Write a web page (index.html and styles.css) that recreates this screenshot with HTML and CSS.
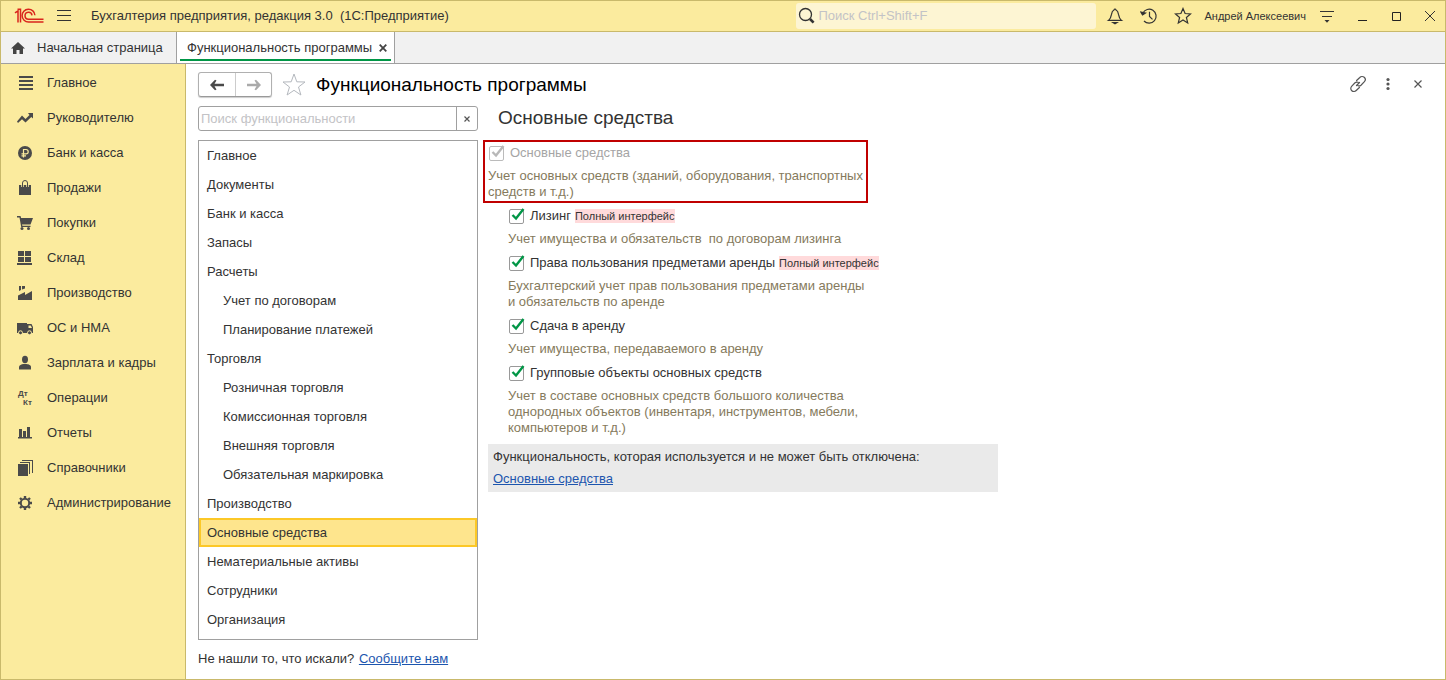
FILE: index.html
```html
<!DOCTYPE html>
<html lang="ru">
<head>
<meta charset="utf-8">
<title>Функциональность программы</title>
<link rel="stylesheet" href="styles.css">
</head>
<body>
<div class="window">
  <header class="titlebar">
    <svg class="logo" width="30" height="16" viewBox="0 0 30 16" fill="none" stroke="#d9241c" stroke-width="1.5">
      <path d="M1 4.800 4 2.800V14.500M3.500 1.300h3V14.500"/>
      <path d="M20.900 7.300A6.400 6.400 0 1 0 14.600 14H29.500"/>
      <path d="M18 7.300A3.500 3.500 0 1 0 14.600 11.200H29.500"/>
    </svg>
    <button class="plain" aria-label="Меню"><svg width="16" height="14" viewBox="0 0 16 14" stroke="#333" fill="none"><path d="M1 1.500h14M1 6.500h14M1 11.500h14"/></svg></button>
    <h1 class="app-title">Бухгалтерия предприятия, редакция 3.0  (1С:Предприятие)</h1>
    <label class="global-search">
      <svg width="18" height="18" viewBox="0 0 18 18" fill="none" stroke="#333"><circle cx="7.500" cy="7.500" r="6" stroke-width="1.300"/><path d="m12 12 3.600 3.600" stroke-width="2.600"/></svg>
      <input type="text" placeholder="Поиск Ctrl+Shift+F" aria-label="Поиск">
    </label>
    <div class="title-tools">
      <button class="plain" aria-label="Уведомления"><svg width="18" height="18" viewBox="0 0 18 18" fill="none" stroke="#333" stroke-width="1.200"><path d="M2.500 13.400h13c-1.800-1.300-2.500-3-3-6C12.200 4.600 11 3.400 9.800 2.800a.8.800 0 0 0-1.600 0C7 3.400 5.800 4.600 5.500 7.400c-.5 3-1.200 4.700-3 6Z"/><path d="M7 15.500h4L9 16.800Z" fill="#333"/></svg></button>
      <button class="plain" aria-label="История"><svg width="18" height="18" viewBox="0 0 18 18" fill="none" stroke="#333" stroke-width="1.200"><path d="M2.800 6.200A7 7 0 1 1 4 14"/><path d="M9.500 4.800v4.600l3 3"/><path d="m.800 5 1.700 3L5.500 6Z" fill="#333"/></svg></button>
      <button class="plain" aria-label="Избранное"><svg width="18" height="18" viewBox="0 0 18 18" fill="none" stroke="#333" stroke-width="1.200"><path d="m9 1.500 2.100 5 5.400.4-4.100 3.600 1.300 5.400L9 13l-4.700 2.900 1.300-5.400L1.500 6.900l5.400-.4Z"/></svg></button>
      <span class="user">Андрей Алексеевич</span>
      <button class="plain" aria-label="Настройки окна"><svg width="18" height="18" viewBox="0 0 18 18" fill="none" stroke="#333"><path d="M2 4.500h14M4 9.500h10"/><path d="M6.500 13h5L9 15.800Z" fill="#333" stroke="none"/></svg></button>
    </div>
    <div class="window-tools">
      <button class="plain" aria-label="Свернуть"><svg width="10" height="10" viewBox="0 0 10 10" stroke="#222"><path d="M1 9.500h9"/></svg></button>
      <button class="plain" aria-label="Развернуть"><svg width="10" height="10" viewBox="0 0 10 10" stroke="#222" fill="none"><path d="M1.500 1.500h8v8h-8Z"/></svg></button>
      <button class="plain" aria-label="Закрыть окно"><svg width="10" height="10" viewBox="0 0 10 10" stroke="#333" fill="none"><path d="m0 0 10 10M10 0 0 10"/></svg></button>
    </div>
  </header>

  <nav class="tabs">
    <a class="tab home" href="#"><svg width="14" height="12" viewBox="0 0 14 12" fill="#444"><path d="M7 0 14 6.600H12V12H8.500V8h-3v4H2V6.600H0Z"/></svg>Начальная страница</a>
    <div class="tab active"><span>Функциональность программы</span><button class="plain" aria-label="Закрыть вкладку"><svg width="8" height="8" viewBox="0 0 8 8" stroke="#444" stroke-width="1.800"><path d="m.7.700 6.600 6.600M7.300.700.700 7.300"/></svg></button></div>
  </nav>

  <div class="body">
    <nav class="sections">
      <a href="#"><svg width="16" height="16" viewBox="0 0 16 16" fill="#4a4a4a"><path d="M2 1h14v2H2ZM2 5h14v2H2ZM2 9h14v2H2ZM2 13h14v2H2Z"/></svg>Главное</a>
      <a href="#"><svg width="16" height="16" viewBox="0 0 16 16" fill="#4a4a4a"><path d="M0 11.500 5 5.500l3.500 3.500L12.500 5 11 3h5v5.500l-1.700-1.600L8.500 12.500 5 9.300l-4 3.600Z"/></svg>Руководителю</a>
      <a href="#"><svg width="16" height="16" viewBox="0 0 16 16"><circle cx="8" cy="8" r="7" fill="#4a4a4a"/><path d="M6.500 12.500V4.500H9a2.200 2.200 0 0 1 0 4.400H4.500M4.500 10.800H9" fill="none" stroke="#fbeb9e" stroke-width="1.200"/></svg>Банк и касса</a>
      <a href="#"><svg width="16" height="16" viewBox="0 0 16 16"><path d="M2 5h12v10H2Z" fill="#4a4a4a"/><path d="M5.500 7V3.500a2.500 2.500 0 0 1 5 0V7" fill="none" stroke="#fbeb9e" stroke-width="2.500"/><path d="M5.500 7V3a2.500 2.500 0 0 1 5 0v4" fill="none" stroke="#4a4a4a"/></svg>Продажи</a>
      <a href="#"><svg width="16" height="16" viewBox="0 0 16 16" fill="#4a4a4a"><path d="M0 1h3.500l.6 2H16l-2.500 6.500H5l.4 1.200h8.100V12H4.200L2.500 2.500H0Z"/><circle cx="5" cy="13.500" r="1.500"/><circle cx="11.500" cy="13.500" r="1.500"/></svg>Покупки</a>
      <a href="#"><svg width="16" height="16" viewBox="0 0 16 16" fill="#4a4a4a"><path d="M1 1h6v5H1ZM8 1h6v5H8ZM1 7h6v5H1ZM8 7h6v5H8ZM0 13h15v2H0Z"/></svg>Склад</a>
      <a href="#"><svg width="16" height="16" viewBox="0 0 16 16" fill="#4a4a4a"><path d="M1 15V10.500L8 7v3l7-4v9ZM2 6V1h2v4ZM5 4.500V1h3v2.500Z"/></svg>Производство</a>
      <a href="#"><svg width="16" height="16" viewBox="0 0 16 16"><path d="M0 3h10v1h4.500L16 7v6H0Z" fill="#4a4a4a"/><path d="M11.500 5.500h2.200L15 8h-3.500Z" fill="#fbeb9e"/><circle cx="3.500" cy="12.800" r="2" fill="#4a4a4a" stroke="#fbeb9e"/><circle cx="12.500" cy="12.800" r="2" fill="#4a4a4a" stroke="#fbeb9e"/></svg>ОС и НМА</a>
      <a href="#"><svg width="16" height="16" viewBox="0 0 16 16" fill="#4a4a4a"><ellipse cx="8" cy="4.500" rx="3" ry="3.700"/><path d="M2 14.500V12c0-2 2.500-2.600 4.500-3h3c2 .4 4.500 1 4.500 3v2.500Z"/></svg>Зарплата и кадры</a>
      <a href="#"><svg class="dtkt" width="16" height="16" viewBox="0 0 16 16" fill="#4a4a4a"><text x="1" y="6">Дт</text><text x="6" y="15">Кт</text></svg>Операции</a>
      <a href="#"><svg width="16" height="16" viewBox="0 0 16 16" fill="#4a4a4a"><path d="M2 4h3v8h1V6h3v6h1V2h3v10h2v1.500H1V12h1Z"/></svg>Отчеты</a>
      <a href="#"><svg width="16" height="16" viewBox="0 0 16 16" fill="#4a4a4a"><path d="M1 4h10v12H1ZM3 2h10v12h-1V3H3ZM5 0h11v13h-1V1H5Z"/></svg>Справочники</a>
      <a href="#"><svg width="16" height="16" viewBox="0 0 16 16" fill="none" stroke="#4a4a4a"><circle cx="8" cy="8" r="4.200" stroke-width="2"/><path d="M8 1v2M8 13v2M1 8h2M13 8h2M3 3l1.500 1.500M11.500 11.500 13 13M3 13l1.500-1.500M11.500 4.500 13 3" stroke-width="2.400"/></svg>Администрирование</a>
    </nav>

    <main class="form">
      <div class="form-head">
        <div class="history">
          <button aria-label="Назад"><svg width="16" height="12" viewBox="0 0 16 12" fill="#4a4a4a"><path d="M1 6 6 .8 7.500 1.500 5.500 4.800H15v2.400H5.500l2 3.300-1.500.7Z"/></svg></button>
          <button aria-label="Вперед"><svg width="16" height="12" viewBox="0 0 16 12" fill="#aaa"><path d="M15 6 10 .8 8.500 1.500l2 3.300H1v2.400h9.500l-2 3.300 1.500.7Z"/></svg></button>
        </div>
        <button class="plain fav" aria-label="В избранное"><svg width="24" height="24" viewBox="0 0 24 24" fill="none" stroke="#b4b8be"><path d="m12 1 2.800 7.800 8.200.2-6.500 5 2.400 8-6.900-4.700L5.100 22l2.400-8L1 9l8.200-.2Z"/></svg></button>
        <h2>Функциональность программы</h2>
        <div class="form-tools">
          <button class="plain" aria-label="Получить ссылку"><svg width="18" height="18" viewBox="0 0 18 18" fill="none" stroke="#555" stroke-width="1.200" stroke-linecap="round"><path d="M7.600 5.500 10.800 2.500a3 3 0 0 1 4.600 4.200L12 10.200a3 3 0 0 1-3 .5M10.400 12.500 7.200 15.500a3 3 0 0 1-4.600-4.200L6 7.800a3 3 0 0 1 3-.5M7.500 10.500l3-3"/></svg></button>
          <button class="plain" aria-label="Еще"><svg width="18" height="18" viewBox="0 0 18 18" fill="#555"><circle cx="9" cy="4.500" r="1.600"/><circle cx="9" cy="9" r="1.600"/><circle cx="9" cy="13.500" r="1.600"/></svg></button>
          <button class="plain" aria-label="Закрыть"><svg width="18" height="18" viewBox="0 0 18 18" stroke="#555" stroke-width="1.200"><path d="m5.500 5.500 7 7M12.500 5.500l-7 7"/></svg></button>
        </div>
      </div>

      <div class="columns">
        <section class="picker">
          <div class="find">
            <input type="text" placeholder="Поиск функциональности" aria-label="Поиск функциональности">
            <button aria-label="Очистить"><svg width="6" height="6" viewBox="0 0 6 6" stroke="#555" stroke-width="1.200"><path d="m.5.500 5 5M5.500.500l-5 5"/></svg></button>
          </div>
          <ul class="list">
            <li>Главное</li>
            <li>Документы</li>
            <li>Банк и касса</li>
            <li>Запасы</li>
            <li>Расчеты</li>
            <li class="sub">Учет по договорам</li>
            <li class="sub">Планирование платежей</li>
            <li>Торговля</li>
            <li class="sub">Розничная торговля</li>
            <li class="sub">Комиссионная торговля</li>
            <li class="sub">Внешняя торговля</li>
            <li class="sub">Обязательная маркировка</li>
            <li>Производство</li>
            <li class="selected">Основные средства</li>
            <li>Нематериальные активы</li>
            <li>Сотрудники</li>
            <li>Организация</li>
          </ul>
          <p class="missing">Не нашли то, что искали? <a href="#">Сообщите нам</a></p>
        </section>

        <section class="details">
          <h3>Основные средства</h3>
          <div class="option framed">
            <label class="check off"><span class="box"><input type="checkbox" checked disabled><svg width="18" height="18" viewBox="0 0 18 18"><path d="M4.500 8 8 11.500 15.500 2"/></svg></span>Основные средства</label>
            <p>Учет основных средств (зданий, оборудования, транспортных средств и т.д.)</p>
          </div>
          <div class="children">
            <div class="option">
              <div class="line"><label class="check"><span class="box"><input type="checkbox" checked><svg width="18" height="18" viewBox="0 0 18 18"><path d="M4.500 8 8 11.500 15.500 2"/></svg></span>Лизинг</label><span class="badge">Полный интерфейс</span></div>
              <p>Учет имущества и обязательств  по договорам лизинга</p>
            </div>
            <div class="option">
              <div class="line"><label class="check"><span class="box"><input type="checkbox" checked><svg width="18" height="18" viewBox="0 0 18 18"><path d="M4.500 8 8 11.500 15.500 2"/></svg></span>Права пользования предметами аренды</label><span class="badge">Полный интерфейс</span></div>
              <p>Бухгалтерский учет прав пользования предметами аренды и обязательств по аренде</p>
            </div>
            <div class="option">
              <div class="line"><label class="check"><span class="box"><input type="checkbox" checked><svg width="18" height="18" viewBox="0 0 18 18"><path d="M4.500 8 8 11.500 15.500 2"/></svg></span>Сдача в аренду</label></div>
              <p>Учет имущества, передаваемого в аренду</p>
            </div>
            <div class="option">
              <div class="line"><label class="check"><span class="box"><input type="checkbox" checked><svg width="18" height="18" viewBox="0 0 18 18"><path d="M4.500 8 8 11.500 15.500 2"/></svg></span>Групповые объекты основных средств</label></div>
              <p>Учет в составе основных средств большого количества однородных объектов (инвентаря, инструментов, мебели, компьютеров и т.д.)</p>
            </div>
          </div>
          <div class="locked">
            <p>Функциональность, которая используется и не может быть отключена:</p>
            <a href="#">Основные средства</a>
          </div>
        </section>
      </div>
    </main>
  </div>
</div>
</body>
</html>
```
FILE: styles.css
```css
* { box-sizing: border-box; }
body {
  margin: 0;
  font: 13px/16px "Liberation Sans", Arial, sans-serif;
  color: #333;
  background: #fff;
}
h1, h2, h3, p, ul { margin: 0; padding: 0; font-weight: normal; }
ul { list-style: none; }
svg { display: block; flex: none; }
button, input { font: inherit; color: inherit; margin: 0; }
a { color: #1c55ae; }

.plain {
  display: flex;
  padding: 0;
  border: 0;
  background: none;
}

.window {
  display: flex;
  flex-direction: column;
  min-height: 100vh;
  border: 1px solid #c9b96b;
}

.titlebar {
  display: flex;
  align-items: center;
  height: 31px;
  padding: 0 10px 0 13px;
  background: #fbeb9e;
  border-bottom: 1px solid #c9b96b;
}
.logo { margin-right: 12px; }
.app-title { margin-left: 19px; font-size: 13px; white-space: pre; }
.global-search {
  display: flex;
  align-items: center;
  gap: 2px;
  width: 300px;
  height: 26px;
  margin-left: auto;
  padding-left: 2px;
  border-radius: 3px;
  background: #fdf5d3;
}
.global-search input {
  flex: 1;
  min-width: 0;
  padding: 0;
  border: 0;
  background: none;
}
input::placeholder { color: #c3c3c6; opacity: 1; }
.title-tools {
  display: flex;
  align-items: center;
  gap: 16px;
  margin-left: 10px;
}
.user { margin: 0 -4px; font-size: 11px; white-space: nowrap; }
.window-tools { display: flex; gap: 24px; margin-left: 21px; }

.tabs {
  display: flex;
  height: 32px;
  background: #f1f1f1;
  border-bottom: 1px solid #a0a0a0;
}
.tab {
  display: flex;
  align-items: center;
  color: #333;
  text-decoration: none;
  white-space: nowrap;
}
.home { gap: 12px; width: 175px; padding-left: 10px; }
.active {
  position: relative;
  gap: 7px;
  padding: 0 7px 0 10px;
  background: #fff;
  border: solid #a0a0a0;
  border-width: 0 1px;
}
.active::after {
  content: "";
  position: absolute;
  left: 3px;
  right: 3px;
  bottom: 2px;
  height: 2px;
  background: #009646;
}

.body { display: flex; flex: 1; }
.sections {
  flex: none;
  width: 185px;
  padding-top: 1px;
  background: #fbeb9e;
  border-right: 1px solid #c9b96b;
}
.sections a {
  display: flex;
  align-items: center;
  gap: 14px;
  height: 35px;
  padding-left: 16px;
  color: #333;
  text-decoration: none;
}
.dtkt { font: bold 8px "Liberation Sans", Arial, sans-serif; }

.form { flex: 1; min-width: 0; padding: 8px 18px 12px 12px; }
.form-head { display: flex; align-items: center; height: 25px; }
.history {
  display: flex;
  height: 25px;
  border: 1px solid #b0b0b0;
  border-bottom-color: #999;
  border-radius: 3px;
  box-shadow: 0 1px 1px #ccc;
}
.history button {
  display: flex;
  align-items: center;
  justify-content: center;
  width: 36px;
  padding: 0;
  border: 0;
  background: none;
}
.history button + button { border-left: 1px solid #ccc; }
.fav { margin: 0 10px; }
.form-head h2 { font-size: 19px; line-height: 24px; color: #000; }
.form-tools { display: flex; gap: 12px; margin-left: auto; padding-bottom: 2px; }

.columns { display: flex; align-items: flex-start; gap: 5px; margin-top: 9px; }
.picker { flex: none; width: 280px; }
.find {
  display: flex;
  height: 25px;
  border: 1px solid #a0a0a0;
  border-radius: 3px;
}
.find input {
  flex: 1;
  min-width: 0;
  padding: 0 2px;
  border: 0;
  background: none;
}
.find button {
  display: flex;
  align-items: center;
  justify-content: center;
  width: 21px;
  padding: 0;
  border: 0;
  border-left: 1px solid #a0a0a0;
  background: none;
}
.list {
  margin-top: 9px;
  padding-bottom: 5px;
  border: 1px solid #a0a0a0;
}
.list li { padding: 7px 8px 6px; }
.list .sub { padding-left: 24px; }
.list .selected {
  padding: 5px 6px 4px;
  border: 2px solid #fcc827;
  background: #fee58d;
}
.missing { margin-top: 11px; }
.missing a { margin-left: 1px; }

.details { flex: 1; min-width: 0; max-width: 515px; }
.details h3 {
  height: 25px;
  padding-left: 15px;
  font-size: 19px;
  line-height: 24px;
}
.option p { margin-top: 4px; color: #857a5c; white-space: pre-wrap; }
.framed {
  max-width: 385px;
  margin-top: 9px;
  padding: 0 0 1px 3px;
  border: 2px solid #c00000;
}
.children {
  display: flex;
  flex-direction: column;
  gap: 5px;
  max-width: 400px;
  margin-top: 2px;
  padding-left: 25px;
}
.children p { max-width: 362px; }
.line { display: flex; align-items: center; gap: 4px; }
.check {
  display: flex;
  align-items: center;
  gap: 6px;
  height: 22px;
  padding-left: 1px;
  white-space: nowrap;
}
.off { color: #a5a5a5; }
.box { position: relative; width: 15px; height: 15px; }
.box input {
  appearance: none;
  display: block;
  width: 15px;
  height: 15px;
  border: 1px solid #999;
  border-radius: 2px;
  background: #fff;
}
.off input { border-color: #bbb; }
.box svg {
  position: absolute;
  left: -1px;
  top: -2px;
  fill: none;
  stroke: #009646;
  stroke-width: 2.4;
  pointer-events: none;
}
.off svg { stroke: #b8b8b8; }
.badge {
  background: #ffdadb;
  font-size: 11px;
  line-height: 14px;
  white-space: nowrap;
}
.locked {
  margin: 8px 0 0 5px;
  padding: 2px 5px;
  background: #eaeaea;
  line-height: 22px;
}
```
